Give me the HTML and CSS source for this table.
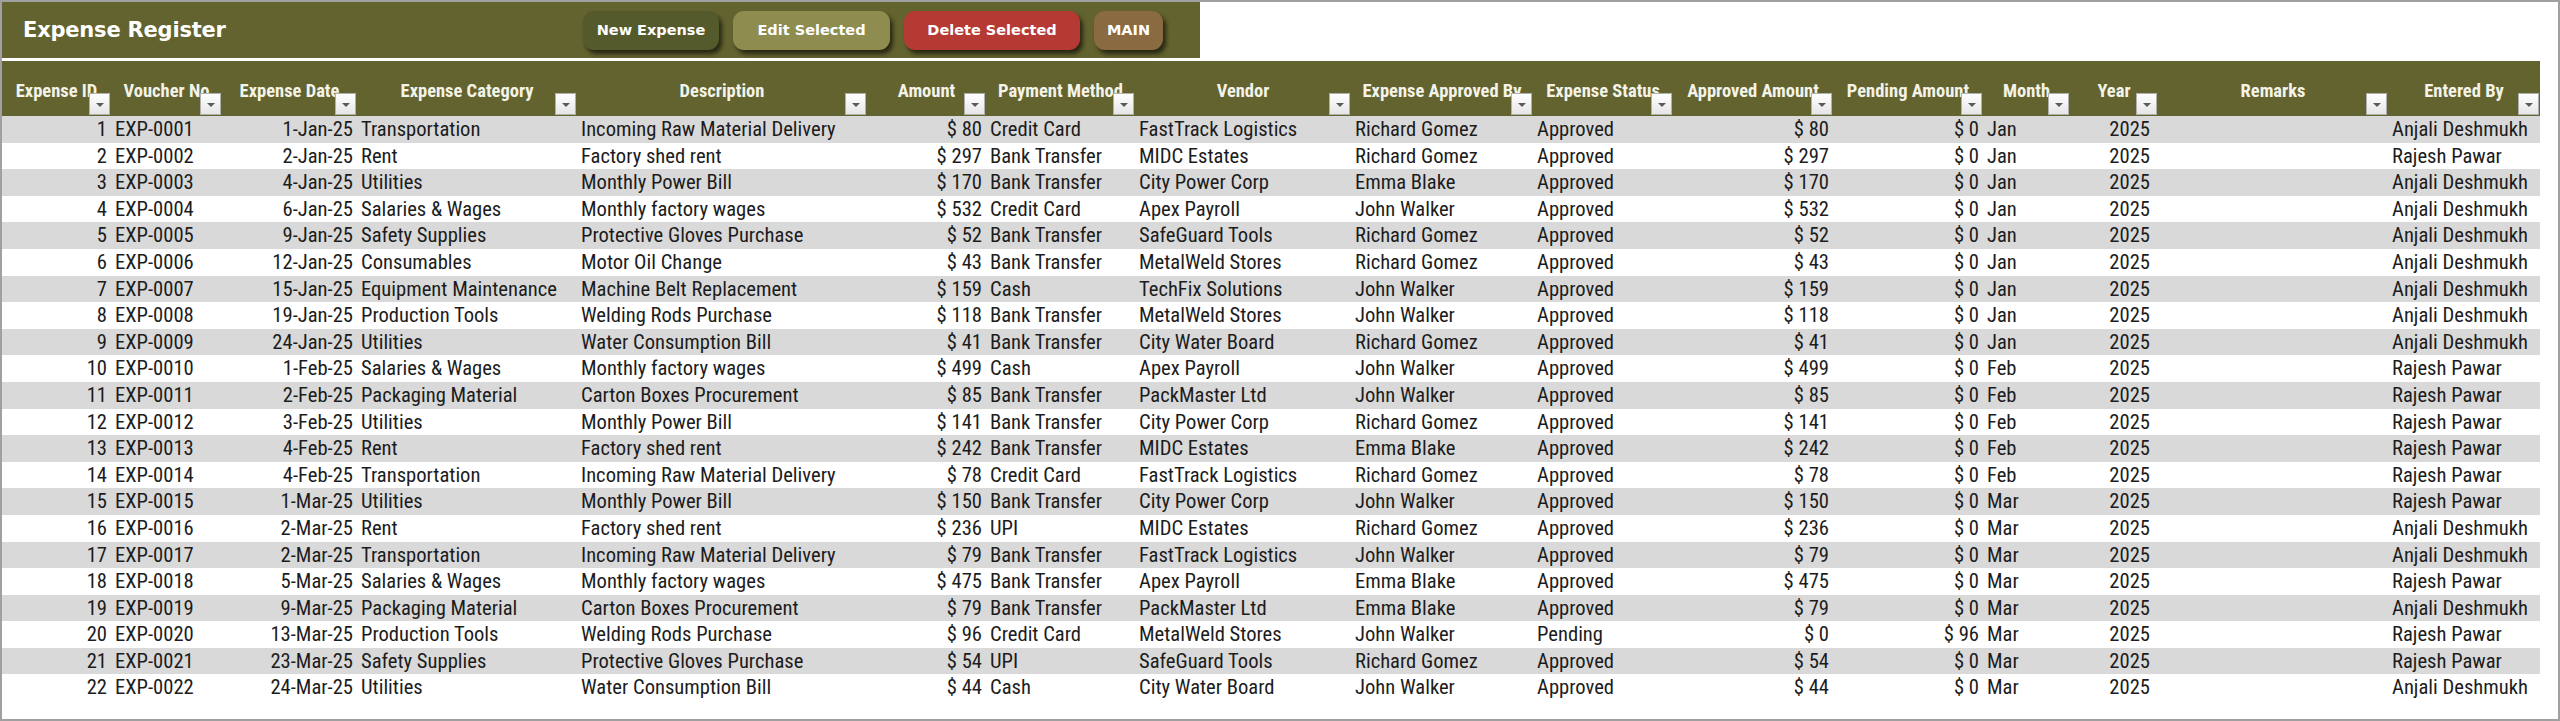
FILE: index.html
```html
<!DOCTYPE html>
<html lang="en">
<head>
<meta charset="utf-8">
<title>Expense Register</title>
<link rel="stylesheet" href="styles.css">
</head>
<body>
<div class="frame">
  <div class="topbar">
    <div class="title">Expense Register</div>
    <div class="actions">
      <div class="btn btn-new">New Expense</div>
      <div class="btn btn-edit">Edit Selected</div>
      <div class="btn btn-del">Delete Selected</div>
      <div class="btn btn-main">MAIN</div>
    </div>
  </div>
  <div class="table">
    <div class="row head">
      <div class="th">Expense ID<span class="flt"></span></div>
      <div class="th">Voucher No<span class="flt"></span></div>
      <div class="th">Expense Date<span class="flt"></span></div>
      <div class="th">Expense Category<span class="flt"></span></div>
      <div class="th">Description<span class="flt"></span></div>
      <div class="th">Amount<span class="flt"></span></div>
      <div class="th">Payment Method<span class="flt"></span></div>
      <div class="th">Vendor<span class="flt"></span></div>
      <div class="th">Expense Approved By<span class="flt"></span></div>
      <div class="th">Expense Status<span class="flt"></span></div>
      <div class="th">Approved Amount<span class="flt"></span></div>
      <div class="th">Pending Amount<span class="flt"></span></div>
      <div class="th">Month<span class="flt"></span></div>
      <div class="th">Year<span class="flt"></span></div>
      <div class="th">Remarks<span class="flt"></span></div>
      <div class="th">Entered By<span class="flt"></span></div>
    </div>
    <div class="row"><div class="r">1</div><div>EXP-0001</div><div class="r">1-Jan-25</div><div>Transportation</div><div>Incoming Raw Material Delivery</div><div class="r">$ 80</div><div>Credit Card</div><div>FastTrack Logistics</div><div>Richard Gomez</div><div>Approved</div><div class="r">$ 80</div><div class="r">$ 0</div><div>Jan</div><div class="r y">2025</div><div></div><div>Anjali Deshmukh</div></div>
    <div class="row"><div class="r">2</div><div>EXP-0002</div><div class="r">2-Jan-25</div><div>Rent</div><div>Factory shed rent</div><div class="r">$ 297</div><div>Bank Transfer</div><div>MIDC Estates</div><div>Richard Gomez</div><div>Approved</div><div class="r">$ 297</div><div class="r">$ 0</div><div>Jan</div><div class="r y">2025</div><div></div><div>Rajesh Pawar</div></div>
    <div class="row"><div class="r">3</div><div>EXP-0003</div><div class="r">4-Jan-25</div><div>Utilities</div><div>Monthly Power Bill</div><div class="r">$ 170</div><div>Bank Transfer</div><div>City Power Corp</div><div>Emma Blake</div><div>Approved</div><div class="r">$ 170</div><div class="r">$ 0</div><div>Jan</div><div class="r y">2025</div><div></div><div>Anjali Deshmukh</div></div>
    <div class="row"><div class="r">4</div><div>EXP-0004</div><div class="r">6-Jan-25</div><div>Salaries &amp; Wages</div><div>Monthly factory wages</div><div class="r">$ 532</div><div>Credit Card</div><div>Apex Payroll</div><div>John Walker</div><div>Approved</div><div class="r">$ 532</div><div class="r">$ 0</div><div>Jan</div><div class="r y">2025</div><div></div><div>Anjali Deshmukh</div></div>
    <div class="row"><div class="r">5</div><div>EXP-0005</div><div class="r">9-Jan-25</div><div>Safety Supplies</div><div>Protective Gloves Purchase</div><div class="r">$ 52</div><div>Bank Transfer</div><div>SafeGuard Tools</div><div>Richard Gomez</div><div>Approved</div><div class="r">$ 52</div><div class="r">$ 0</div><div>Jan</div><div class="r y">2025</div><div></div><div>Anjali Deshmukh</div></div>
    <div class="row"><div class="r">6</div><div>EXP-0006</div><div class="r">12-Jan-25</div><div>Consumables</div><div>Motor Oil Change</div><div class="r">$ 43</div><div>Bank Transfer</div><div>MetalWeld Stores</div><div>Richard Gomez</div><div>Approved</div><div class="r">$ 43</div><div class="r">$ 0</div><div>Jan</div><div class="r y">2025</div><div></div><div>Anjali Deshmukh</div></div>
    <div class="row"><div class="r">7</div><div>EXP-0007</div><div class="r">15-Jan-25</div><div>Equipment Maintenance</div><div>Machine Belt Replacement</div><div class="r">$ 159</div><div>Cash</div><div>TechFix Solutions</div><div>John Walker</div><div>Approved</div><div class="r">$ 159</div><div class="r">$ 0</div><div>Jan</div><div class="r y">2025</div><div></div><div>Anjali Deshmukh</div></div>
    <div class="row"><div class="r">8</div><div>EXP-0008</div><div class="r">19-Jan-25</div><div>Production Tools</div><div>Welding Rods Purchase</div><div class="r">$ 118</div><div>Bank Transfer</div><div>MetalWeld Stores</div><div>John Walker</div><div>Approved</div><div class="r">$ 118</div><div class="r">$ 0</div><div>Jan</div><div class="r y">2025</div><div></div><div>Anjali Deshmukh</div></div>
    <div class="row"><div class="r">9</div><div>EXP-0009</div><div class="r">24-Jan-25</div><div>Utilities</div><div>Water Consumption Bill</div><div class="r">$ 41</div><div>Bank Transfer</div><div>City Water Board</div><div>Richard Gomez</div><div>Approved</div><div class="r">$ 41</div><div class="r">$ 0</div><div>Jan</div><div class="r y">2025</div><div></div><div>Anjali Deshmukh</div></div>
    <div class="row"><div class="r">10</div><div>EXP-0010</div><div class="r">1-Feb-25</div><div>Salaries &amp; Wages</div><div>Monthly factory wages</div><div class="r">$ 499</div><div>Cash</div><div>Apex Payroll</div><div>John Walker</div><div>Approved</div><div class="r">$ 499</div><div class="r">$ 0</div><div>Feb</div><div class="r y">2025</div><div></div><div>Rajesh Pawar</div></div>
    <div class="row"><div class="r">11</div><div>EXP-0011</div><div class="r">2-Feb-25</div><div>Packaging Material</div><div>Carton Boxes Procurement</div><div class="r">$ 85</div><div>Bank Transfer</div><div>PackMaster Ltd</div><div>John Walker</div><div>Approved</div><div class="r">$ 85</div><div class="r">$ 0</div><div>Feb</div><div class="r y">2025</div><div></div><div>Rajesh Pawar</div></div>
    <div class="row"><div class="r">12</div><div>EXP-0012</div><div class="r">3-Feb-25</div><div>Utilities</div><div>Monthly Power Bill</div><div class="r">$ 141</div><div>Bank Transfer</div><div>City Power Corp</div><div>Richard Gomez</div><div>Approved</div><div class="r">$ 141</div><div class="r">$ 0</div><div>Feb</div><div class="r y">2025</div><div></div><div>Rajesh Pawar</div></div>
    <div class="row"><div class="r">13</div><div>EXP-0013</div><div class="r">4-Feb-25</div><div>Rent</div><div>Factory shed rent</div><div class="r">$ 242</div><div>Bank Transfer</div><div>MIDC Estates</div><div>Emma Blake</div><div>Approved</div><div class="r">$ 242</div><div class="r">$ 0</div><div>Feb</div><div class="r y">2025</div><div></div><div>Rajesh Pawar</div></div>
    <div class="row"><div class="r">14</div><div>EXP-0014</div><div class="r">4-Feb-25</div><div>Transportation</div><div>Incoming Raw Material Delivery</div><div class="r">$ 78</div><div>Credit Card</div><div>FastTrack Logistics</div><div>Richard Gomez</div><div>Approved</div><div class="r">$ 78</div><div class="r">$ 0</div><div>Feb</div><div class="r y">2025</div><div></div><div>Rajesh Pawar</div></div>
    <div class="row"><div class="r">15</div><div>EXP-0015</div><div class="r">1-Mar-25</div><div>Utilities</div><div>Monthly Power Bill</div><div class="r">$ 150</div><div>Bank Transfer</div><div>City Power Corp</div><div>John Walker</div><div>Approved</div><div class="r">$ 150</div><div class="r">$ 0</div><div>Mar</div><div class="r y">2025</div><div></div><div>Rajesh Pawar</div></div>
    <div class="row"><div class="r">16</div><div>EXP-0016</div><div class="r">2-Mar-25</div><div>Rent</div><div>Factory shed rent</div><div class="r">$ 236</div><div>UPI</div><div>MIDC Estates</div><div>Richard Gomez</div><div>Approved</div><div class="r">$ 236</div><div class="r">$ 0</div><div>Mar</div><div class="r y">2025</div><div></div><div>Anjali Deshmukh</div></div>
    <div class="row"><div class="r">17</div><div>EXP-0017</div><div class="r">2-Mar-25</div><div>Transportation</div><div>Incoming Raw Material Delivery</div><div class="r">$ 79</div><div>Bank Transfer</div><div>FastTrack Logistics</div><div>John Walker</div><div>Approved</div><div class="r">$ 79</div><div class="r">$ 0</div><div>Mar</div><div class="r y">2025</div><div></div><div>Anjali Deshmukh</div></div>
    <div class="row"><div class="r">18</div><div>EXP-0018</div><div class="r">5-Mar-25</div><div>Salaries &amp; Wages</div><div>Monthly factory wages</div><div class="r">$ 475</div><div>Bank Transfer</div><div>Apex Payroll</div><div>Emma Blake</div><div>Approved</div><div class="r">$ 475</div><div class="r">$ 0</div><div>Mar</div><div class="r y">2025</div><div></div><div>Rajesh Pawar</div></div>
    <div class="row"><div class="r">19</div><div>EXP-0019</div><div class="r">9-Mar-25</div><div>Packaging Material</div><div>Carton Boxes Procurement</div><div class="r">$ 79</div><div>Bank Transfer</div><div>PackMaster Ltd</div><div>Emma Blake</div><div>Approved</div><div class="r">$ 79</div><div class="r">$ 0</div><div>Mar</div><div class="r y">2025</div><div></div><div>Anjali Deshmukh</div></div>
    <div class="row"><div class="r">20</div><div>EXP-0020</div><div class="r">13-Mar-25</div><div>Production Tools</div><div>Welding Rods Purchase</div><div class="r">$ 96</div><div>Credit Card</div><div>MetalWeld Stores</div><div>John Walker</div><div>Pending</div><div class="r">$ 0</div><div class="r">$ 96</div><div>Mar</div><div class="r y">2025</div><div></div><div>Rajesh Pawar</div></div>
    <div class="row"><div class="r">21</div><div>EXP-0021</div><div class="r">23-Mar-25</div><div>Safety Supplies</div><div>Protective Gloves Purchase</div><div class="r">$ 54</div><div>UPI</div><div>SafeGuard Tools</div><div>Richard Gomez</div><div>Approved</div><div class="r">$ 54</div><div class="r">$ 0</div><div>Mar</div><div class="r y">2025</div><div></div><div>Rajesh Pawar</div></div>
    <div class="row"><div class="r">22</div><div>EXP-0022</div><div class="r">24-Mar-25</div><div>Utilities</div><div>Water Consumption Bill</div><div class="r">$ 44</div><div>Cash</div><div>City Water Board</div><div>John Walker</div><div>Approved</div><div class="r">$ 44</div><div class="r">$ 0</div><div>Mar</div><div class="r y">2025</div><div></div><div>Anjali Deshmukh</div></div>
  </div>
</div>
</body>
</html>
```

FILE: styles.css
```css
* { box-sizing: border-box; }
html, body { margin: 0; padding: 0; }
body { width: 2560px; height: 721px; overflow: hidden; background: #ffffff; }

.frame {
  width: 2560px;
  height: 721px;
  border: 2px solid #a0a0a0;
  background: #ffffff;
}

.topbar {
  width: 1198px;
  height: 56px;
  background: #63632f;
  display: flex;
  align-items: center;
  padding: 0 37px 0 21px;
  margin-bottom: 3px;
}
.title {
  font-family: "DejaVu Sans", sans-serif;
  font-weight: bold;
  font-size: 21px;
  letter-spacing: -0.2px;
  color: #ffffff;
}
.actions { margin-left: auto; display: flex; gap: 14px; }
.btn {
  height: 39px;
  border-radius: 11px;
  color: #ffffff;
  font-family: "DejaVu Sans", sans-serif;
  font-weight: bold;
  font-size: 14.5px;
  display: flex;
  align-items: center;
  justify-content: center;
  box-shadow: 3px 4px 4px rgba(0, 0, 0, 0.6);
}
.btn-new { width: 136px; background: #555a2c; }
.btn-edit { width: 157px; background: #8e8d4f; }
.btn-del { width: 176px; background: #b43a33; }
.btn-main { width: 69px; background: #8a6a40; }

.table { width: 2538px; }
.row {
  display: grid;
  grid-template-columns: 109px 111px 135px 220px 290px 119px 149px 216px 182px 140px 160px 150px 87px 88px 230px 152px;
  height: 26.6px;
  font-family: "Roboto Condensed", "Roboto", sans-serif;
  font-stretch: 75%;
  font-size: 20.6px;
  color: #1c1c1c;
}
.row:nth-child(even) { background: #d9d9d9; }
.row:nth-child(odd) { background: #ffffff; }
.row > div {
  padding: 0 4px;
  white-space: nowrap;
  line-height: 26.6px;
}
.row > .r { text-align: right; }
.row > .y { padding-right: 8px; }

.row.head {
  height: 55px;
  background: #63632f;
  font-weight: bold;
  font-size: 18.5px;
  color: #f3f3e8;
}
.th {
  position: relative;
  display: flex;
  align-items: center;
  justify-content: center;
  padding-top: 5px !important;
  line-height: 22px !important;
}
.flt {
  position: absolute;
  right: 1px;
  bottom: 1px;
  width: 21px;
  height: 22px;
  background: linear-gradient(#ffffff, #e6e6e6);
  border: 1px solid #b0b0b0;
}
.flt::after {
  content: "";
  position: absolute;
  left: 6px;
  top: 9px;
  border-left: 4px solid transparent;
  border-right: 4px solid transparent;
  border-top: 4px solid #5a5a5a;
}
```
